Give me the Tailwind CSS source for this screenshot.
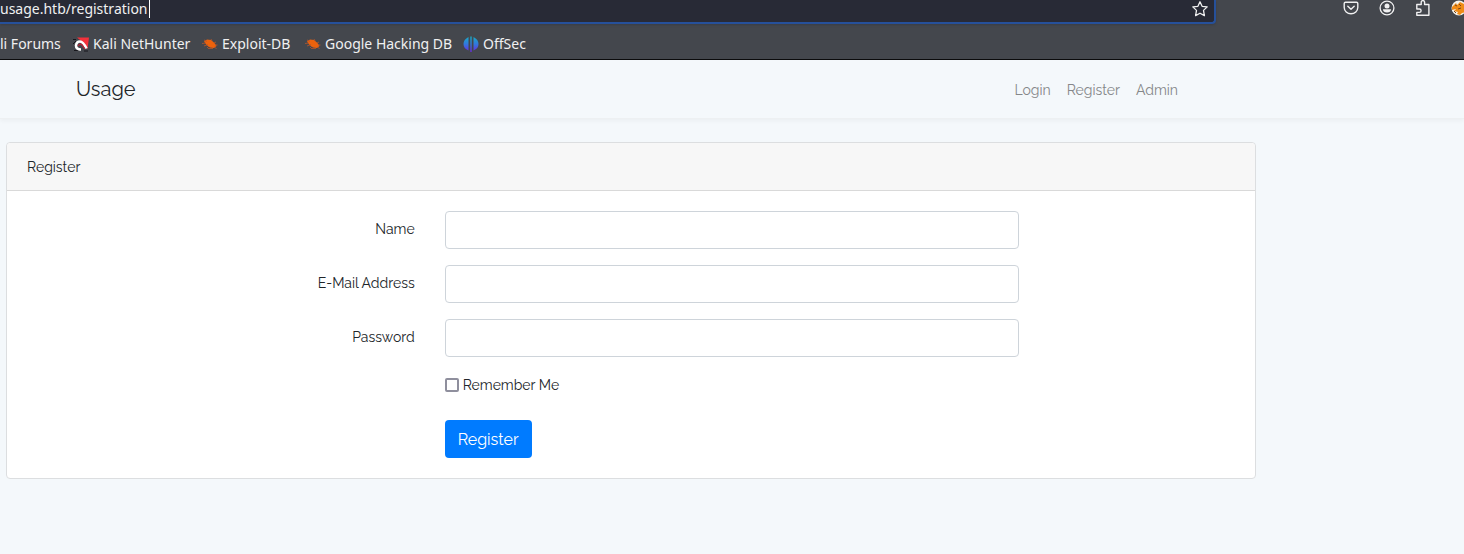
<!DOCTYPE html>
<html lang="en">
<head>
<meta charset="utf-8">
<meta name="viewport" content="width=device-width, initial-scale=1">
<title>Usage</title>
<script src="https://cdn.jsdelivr.net/npm/@tailwindcss/browser@4"></script>
</head>
<body class="min-h-screen bg-[#f4f8fb] font-['Raleway','Lato',sans-serif] text-[14px] leading-6 text-[#212529]">
  <div class="h-[60px] overflow-hidden border-b border-[#0c0c0d] bg-[#44474d] font-['Noto_Sans',sans-serif] text-[14px] text-[#f0f0f1]">
    <div class="flex h-6 items-start justify-between">
      <div class="flex h-6 w-[1216px] items-center justify-between rounded-br border-r-2 border-b-2 border-[#26509a] bg-[#282a36] pr-1.5 shadow-sm">
        <div class="flex h-full items-start"><input aria-label="Address" value="usage.htb/registration" class="h-[18px] w-[149px] bg-transparent p-0 leading-[18px] outline-none"><span class="h-[18px] w-px bg-white"></span></div>
        <button type="button" aria-label="Bookmark this page" class="mb-1">
          <svg class="size-4" viewBox="0 0 16 16" fill="none" stroke="currentColor" stroke-width="1.3" stroke-linejoin="round"><path d="M8 .8l2.1 4.5 5.1.6-3.7 3.5.9 5.2L8 12.200l-4.400 2.400.9-5.200L.8 5.900l5.100-.6z"/></svg>
        </button>
      </div>
      <div class="flex h-4 shrink-0 items-center gap-5 overflow-hidden pl-4">
        <button type="button" aria-label="Save to Pocket"><svg class="size-4" viewBox="0 0 16 16" fill="none" stroke="currentColor" stroke-width="1.400" stroke-linecap="round" stroke-linejoin="round"><path d="M2.500 2.200h11q1.300 0 1.300 1.300v4a6.800 6.300 0 0 1-13.600 0v-4q0-1.300 1.300-1.300zM4.800 6.200L8 9.300l3.200-3.100"/></svg></button>
        <button type="button" aria-label="Account"><svg class="size-4" viewBox="0 0 16 16"><circle cx="8" cy="8" r="6.900" fill="none" stroke="currentColor" stroke-width="1.300"/><circle cx="8" cy="5.900" r="2.500" fill="currentColor"/><path d="M3.900 9.300h8.200q-.4 3.200-4.100 3.200t-4.100-3.200z" fill="currentColor"/></svg></button>
        <button type="button" aria-label="Extensions"><svg class="size-4" viewBox="0 0 16 16" fill="none" stroke="currentColor" stroke-width="1.400" stroke-linejoin="round"><path d="M1.800 7.200V4.500h4.400V2.300a1.700 1.700 0 0 1 3.400 0v2.200h4.300v10.700H1.800v-2.800h2.600a1.700 1.700 0 0 0 0-3.400H1.800z"/></svg></button>
        <button type="button" aria-label="FoxyProxy" class="w-[13px] overflow-hidden"><svg class="size-4" viewBox="0 0 16 16"><circle cx="8" cy="8" r="7.500" fill="#f4f1ea"/><path d="M1 7l4-4 1 2 3-3 6 3v7l-4 1-2 2-3-1 1-2-4-1 2-2-4 1z" fill="#f08b16"/><path d="M4 5l2 1M8 4l2 2M7 9l3-1M3 11l2 2" stroke="#784718" stroke-width="1"/></svg></button>
      </div>
    </div>
    <nav aria-label="Bookmarks" class="flex h-10 items-center whitespace-nowrap">
      <a href="#" class="w-[61px]">li Forums</a>
      <a href="#" class="ml-3 flex items-center gap-1">
        <svg class="size-4" viewBox="0 0 16 16"><path d="M4 1.500h12L14.500 13l-5-7z" fill="#f3313b"/><path d="M0 3.500h3M0 8l3-3M1 14.500h5M11 15h4" stroke="#17171c" stroke-width="1"/><path d="M8 13.500Q3 13.500 3 9.500 3.500 5.500 7 5.500q3 0 6.500 7" fill="none" stroke="#fff" stroke-width="2.600"/><path d="M5 10q2-3 4-1l3 4" fill="none" stroke="#c31e30" stroke-width="1.200"/></svg>
        <span class="w-[97px]">Kali NetHunter</span>
      </a>
      <a href="#" class="ml-3 flex items-center gap-1">
        <svg class="size-4" viewBox="0 0 16 16" fill="none"><path d="M2 5.500l3-2 4 .5 3.500 3 2 3-2.500 2-4-.5-3.500-2.500z" fill="#ed620c"/><path d="M2 4l3 1.500M0 7.500l4-.5M2 10l4-1.500M5 12l2-2M6 12.500h5M9 3l1 2M12 7l2-1M13 9h2.500M12 11l2.500 1.500" stroke="#b9562a" stroke-width=".8"/></svg>
        <span class="w-[71px]">Exploit-DB</span>
      </a>
      <a href="#" class="ml-3 flex items-center gap-1">
        <svg class="size-4" viewBox="0 0 16 16" fill="none"><path d="M2 5.500l3-2 4 .5 3.500 3 2 3-2.500 2-4-.5-3.500-2.500z" fill="#ed620c"/><path d="M2 4l3 1.500M0 7.500l4-.5M2 10l4-1.500M5 12l2-2M6 12.500h5M9 3l1 2M12 7l2-1M13 9h2.500M12 11l2.500 1.500" stroke="#b9562a" stroke-width=".8"/></svg>
        <span class="w-[126px]">Google Hacking DB</span>
      </a>
      <a href="#" class="ml-3 flex items-center gap-1">
        <svg class="size-4" viewBox="0 0 16 16"><defs><linearGradient id="offsec" gradientUnits="userSpaceOnUse" x1="0" y1="0" x2="0" y2="16"><stop stop-color="#16b0c2"/><stop offset=".5" stop-color="#3279dd"/><stop offset="1" stop-color="#6a28df"/></linearGradient></defs><path d="M5.500 1v13.500Q.5 12.500.5 8t5-7zM7.300.5h1.400v15.500H7.300zM10.500 1q5 2.500 5 7t-5 6.500z" fill="url(#offsec)"/></svg>
        <span>OffSec</span>
      </a>
    </nav>
  </div>

  <header class="border-b border-[#edf0f2] shadow-[0_2px_4px_rgba(0,0,0,0.04)]">
    <nav class="ml-[76px] flex h-[58px] max-w-[1102px] items-center justify-between">
      <a href="#" class="text-[20px]">Usage</a>
      <div class="flex gap-4 pt-0.5 text-[#858789]">
        <a href="#">Login</a><a href="#">Register</a><a href="#">Admin</a>
      </div>
    </nav>
  </header>

  <main class="px-1.5 pt-[23px]">
    <section class="max-w-[1250px] rounded border border-[#dcdee0] bg-white">
      <h1 class="rounded-t border-b border-[#d9d9d9] bg-[#f7f7f7] px-5 pt-3 pb-[11px]">Register</h1>
      <form class="flex flex-col gap-4 p-5">
        <div class="grid grid-cols-12">
          <label for="name" class="col-span-4 px-[15px] pt-1.5 text-right">Name</label>
          <div class="col-span-6 px-[15px]"><input id="name" type="text" class="block h-[38px] w-full rounded border border-[#ced4da] bg-white px-3"></div>
        </div>
        <div class="grid grid-cols-12">
          <label for="email" class="col-span-4 px-[15px] pt-1.5 text-right">E-Mail Address</label>
          <div class="col-span-6 px-[15px]"><input id="email" type="email" class="block h-[38px] w-full rounded border border-[#ced4da] bg-white px-3"></div>
        </div>
        <div class="grid grid-cols-12">
          <label for="password" class="col-span-4 px-[15px] pt-1.5 text-right">Password</label>
          <div class="col-span-6 px-[15px]"><input id="password" type="password" class="block h-[38px] w-full rounded border border-[#ced4da] bg-white px-3"></div>
        </div>
        <div class="grid grid-cols-12">
          <div class="col-span-6 col-start-5 px-[15px]">
            <label class="flex w-fit items-center gap-1"><input type="checkbox" class="size-3.5 appearance-none rounded-xs border-2 border-[#8f8f9d] bg-white checked:bg-[#007bff]">Remember Me</label>
            <button type="submit" class="mt-[23px] block h-[38px] rounded bg-[#007bff] px-[13px] pt-0.5 text-[16px] text-white">Register</button>
          </div>
        </div>
      </form>
    </section>
  </main>
</body>
</html>
